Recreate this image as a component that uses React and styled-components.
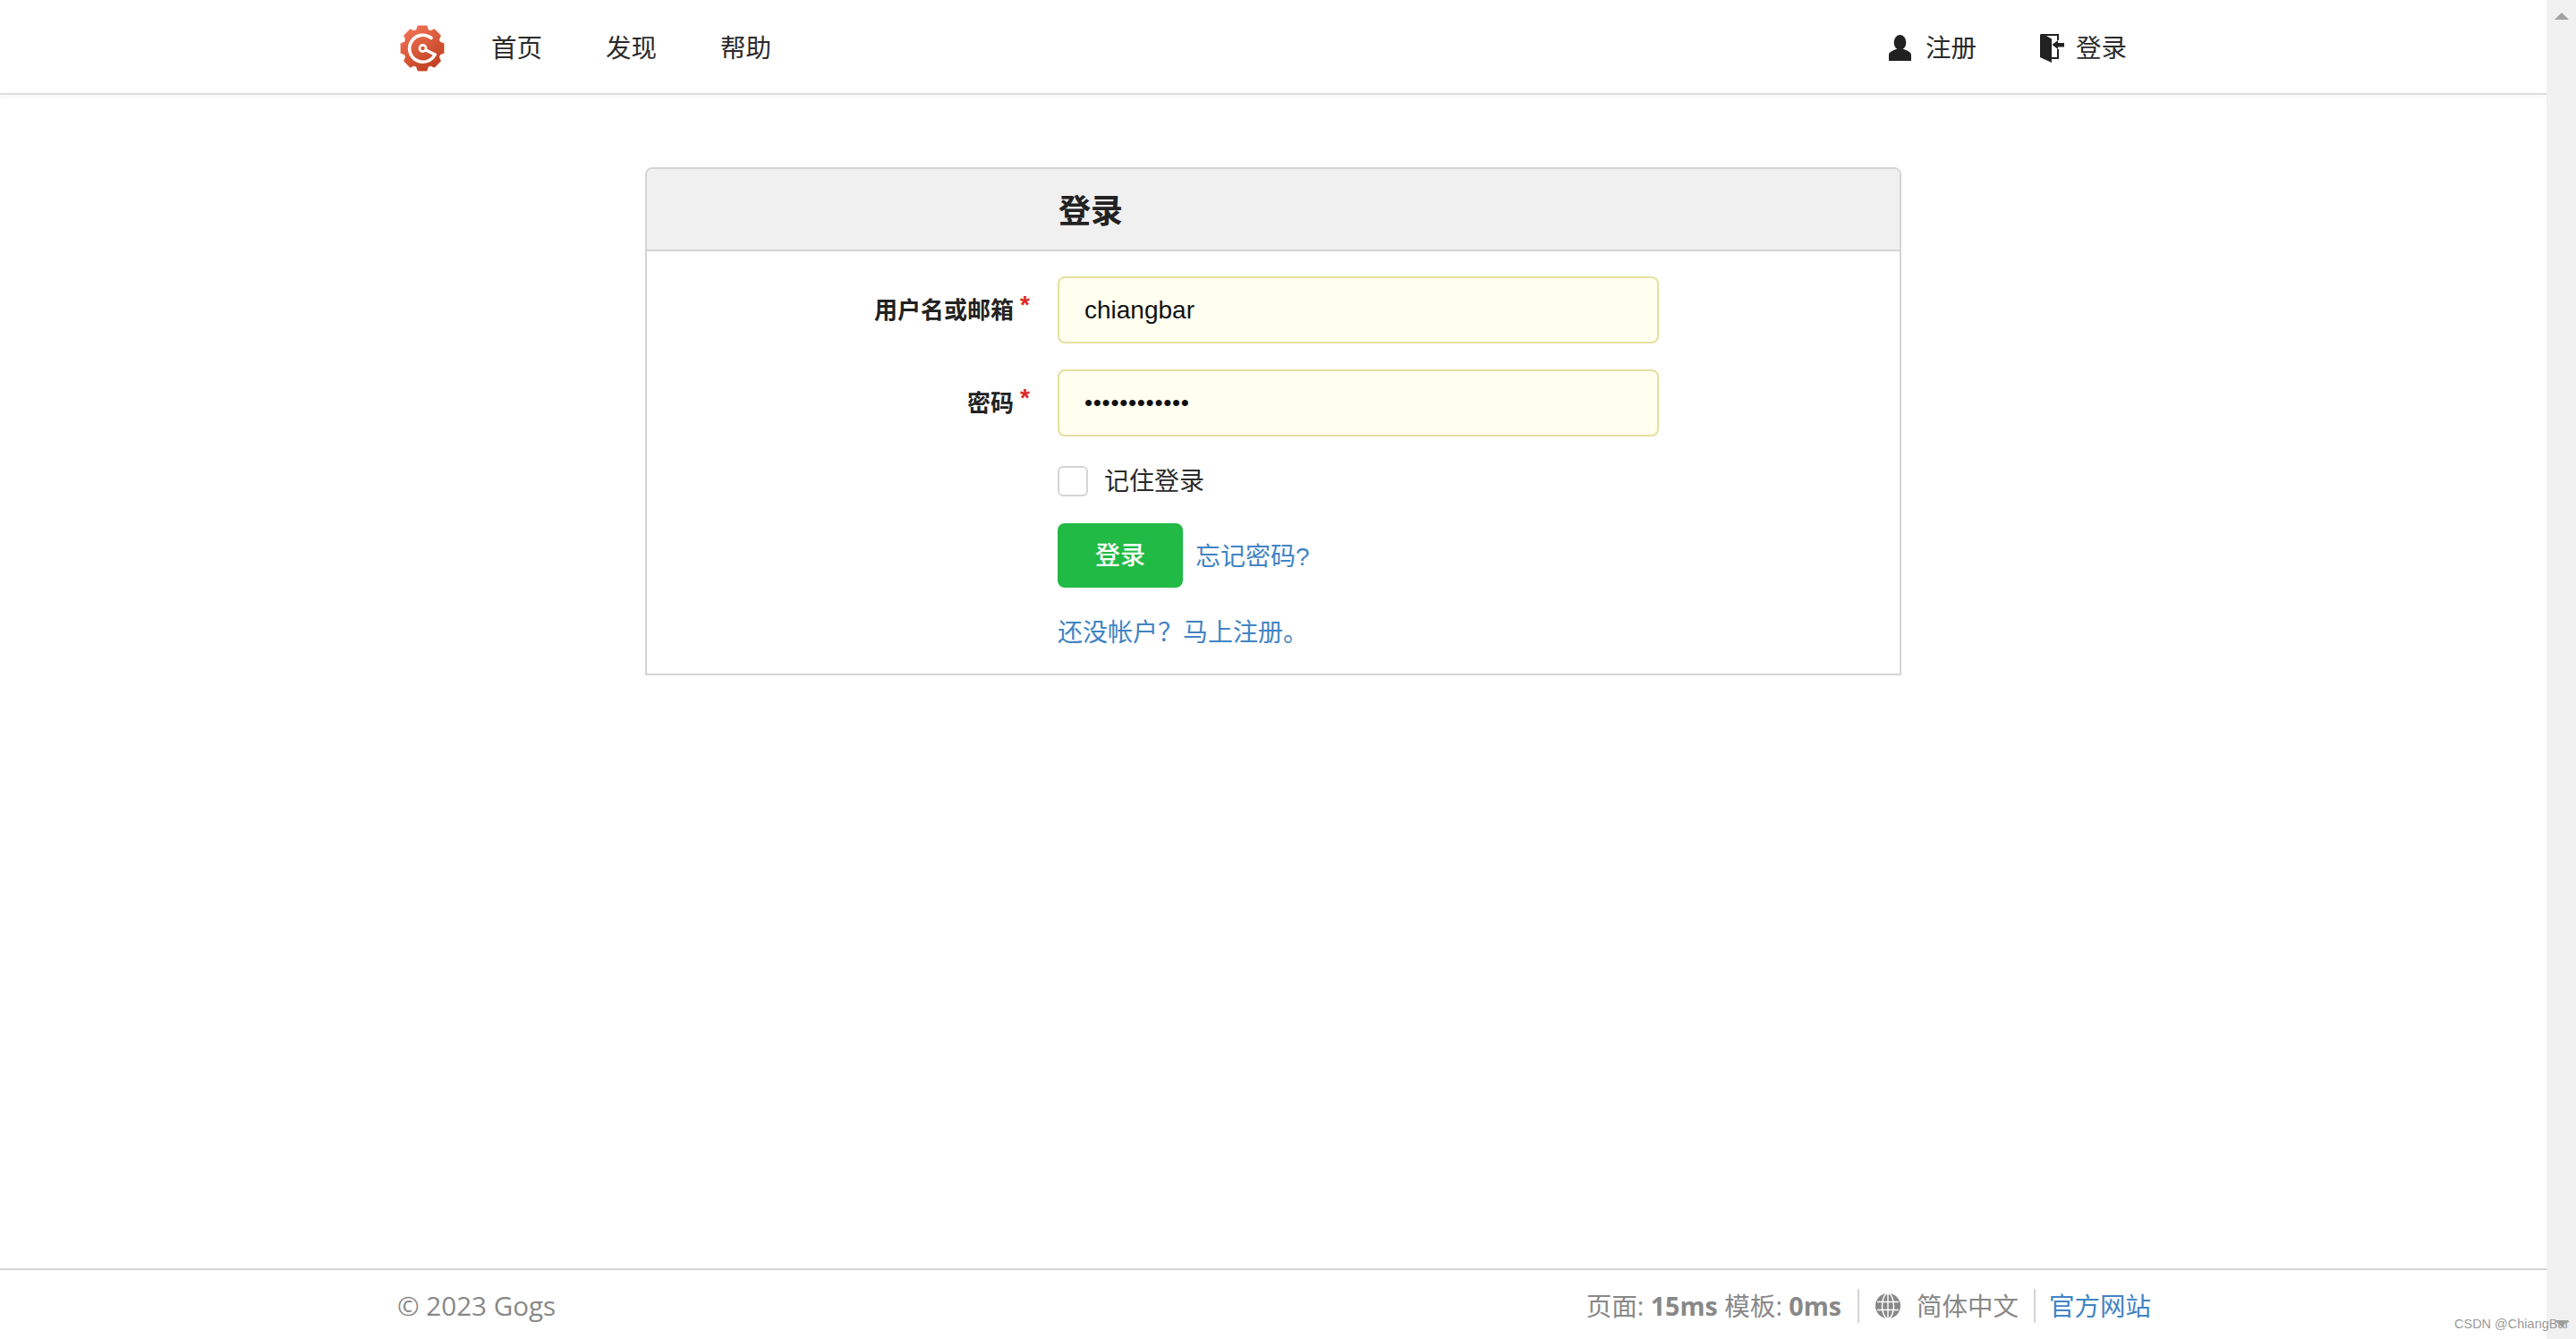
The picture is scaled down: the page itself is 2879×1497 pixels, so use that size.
import React from "react";
import styled, { createGlobalStyle } from "styled-components";

const Global = createGlobalStyle`
  *, *::before, *::after { box-sizing: border-box; }
  html, body { margin: 0; height: 100%; overflow: hidden; background: #fff; }
  body { font-family: "Liberation Sans", "Noto Sans CJK SC", sans-serif; color: #212121; }
  a { text-decoration: none; }
`;
const CJK = `"Liberation Sans", "Noto Sans CJK SC", sans-serif`;
const FOOT = `"Open Sans", "Noto Sans CJK SC", sans-serif`;

const Shell = styled.div`
  position: relative;
  display: flex;
  width: 100%;
  height: 100vh;
`;
const Page = styled.div`
  flex: 1;
  min-width: 0;
  display: flex;
  flex-direction: column;
`;
const Scrollbar = styled.aside`
  width: 33px;
  flex: none;
  background: #f1f1f1;
  display: flex;
  flex-direction: column;
  justify-content: space-between;
  align-items: center;
  padding: 14px 0 13px;
`;
const ArrowUp = styled.i`
  width: 0;
  height: 0;
  border-left: 8px solid transparent;
  border-right: 8px solid transparent;
  border-bottom: 8px solid #a3a3a3;
`;
const ArrowDown = styled.i`
  width: 0;
  height: 0;
  border-left: 8px solid transparent;
  border-right: 8px solid transparent;
  border-top: 8px solid #a3a3a3;
`;
const Watermark = styled.div`
  position: absolute;
  left: 2743px;
  top: 1472px;
  font: 14.5px/17px "Liberation Sans", sans-serif;
  color: #9a9a9a;
  white-space: nowrap;
`;

const Nav = styled.header`
  height: 106px;
  flex: none;
  border-bottom: 2px solid #dedede;
  box-shadow: 0 2px 8px rgba(34, 36, 38, 0.05);
`;
const NavInner = styled.div`
  width: 1958px;
  height: 100%;
  margin: 0 auto;
  display: flex;
  align-items: center;
  padding: 3px 24px 0 3px;
`;
const LogoLink = styled.a`
  display: flex;
  margin-right: 52px;
  filter: blur(0.5px);
`;
const NavLink = styled.a`
  font-size: 28.5px;
  line-height: 40px;
  color: #2b2b2b;
  font-family: ${CJK};
  margin-right: ${(p) => p.$gap || 71}px;
  display: flex;
  align-items: center;
  gap: ${(p) => p.$icon || 0}px;
`;
const Spacer = styled.div`
  flex: 1;
`;

const Main = styled.main`
  flex: 1;
  padding-top: 81px;
`;
const Panel = styled.section`
  width: 1404px;
  margin: 0 auto;
  border: 2px solid #d4d4d5;
  border-radius: 8px 8px 0 0;
`;
const PanelTitle = styled.h3`
  margin: 0;
  height: 92px;
  padding-left: 460px;
  background: #f0f0f0;
  border-bottom: 2px solid #d4d4d5;
  border-radius: 6px 6px 0 0;
  font: 700 36px/95px ${CJK};
  color: #222;
`;
const Form = styled.form`
  padding: 28px 0 25px;
  display: flex;
  flex-direction: column;
`;
const Row = styled.div`
  display: flex;
  align-items: center;
  margin-bottom: ${(p) => p.$mb ?? 29}px;
`;
const LabelCell = styled.label`
  width: 459px;
  flex: none;
  padding-right: 49px;
  text-align: right;
  font: 700 26px/34px ${CJK};
  color: #222;
  position: relative;
  &::after {
    content: "*";
    position: absolute;
    right: 31px;
    top: -3px;
    color: #db2828;
    font: 700 28px/28px "Liberation Sans", sans-serif;
  }
`;
const Offset = styled.div`
  width: 459px;
  flex: none;
`;
const TextInput = styled.input`
  width: 672px;
  height: 75px;
  padding: 0 28px;
  background: #fffff0;
  border: 2px solid #e5dfa0;
  border-radius: 8px;
  outline: none;
  color: #111;
  font: 28px "Liberation Sans", sans-serif;
  ${(p) => p.type === "password" && "letter-spacing: 0.7px; font-size: 26px;"}
`;
const Check = styled.input`
  appearance: none;
  width: 34px;
  height: 34px;
  margin: 0 18px 0 0;
  background: #fff;
  border: 2px solid #d4d4d5;
  border-radius: 6px;
`;
const CheckLabel = styled.label`
  font: 28px/40px ${CJK};
  color: #2b2b2b;
  padding-top: 2px;
`;
const Submit = styled.button`
  width: 140px;
  height: 72px;
  padding: 0;
  border: 0;
  border-radius: 8px;
  background: #21ba45;
  color: #fff;
  font: 500 28px/74px ${CJK};
  margin-right: 14px;
`;
const TextLink = styled.a`
  color: #4183c4;
  font: 28px/40px ${CJK};
  padding-top: ${(p) => p.$top || 0}px;
`;

const Footer = styled.footer`
  height: 79px;
  flex: none;
  border-top: 2px solid #d4d4d5;
`;
const FooterInner = styled.div`
  width: 1958px;
  height: 100%;
  margin: 0 auto;
  padding-top: 2px;
  display: flex;
  align-items: center;
  justify-content: space-between;
  color: #888;
  font: 29.6px/40px ${FOOT};
`;
const FooterRight = styled.div`
  display: flex;
  align-items: center;
  margin-right: -2px;
`;
const Stats = styled.span`
  font-size: 28.6px;
  white-space: nowrap;
  b { font-weight: 700; }
`;
const VLine = styled.i`
  width: 2px;
  height: 38px;
  background: #d4d4d5;
  margin: 0 ${(p) => p.$r}px 0 ${(p) => p.$l}px;
`;
const Lang = styled.span`
  display: flex;
  align-items: center;
  gap: 18px;
  font-size: 28.5px;
`;
const FootLink = styled.a`
  color: #4183c4;
  font-size: 28.5px;
`;

const gearPath = (() => {
  const pt = (r, deg) => {
    const a = (deg * Math.PI) / 180;
    return `${(25 + 0.96 * r * Math.cos(a)).toFixed(2)} ${(26 + r * Math.sin(a)).toFixed(2)}`;
  };
  const parts = [];
  for (let i = 0; i < 8; i++) {
    const c = -90 + i * 45;
    parts.push(pt(22, c - 19), pt(26, c - 12), pt(26, c + 12), pt(22, c + 19));
  }
  return `M${parts.join("L")}Z`;
})();

const Logo = () => (
  <svg width="50" height="52" viewBox="0 0 50 52" aria-label="Gogs">
    <defs>
      <linearGradient id="g" x1="0.2" y1="0" x2="0.8" y2="1">
        <stop offset="0" stopColor="#f27456" />
        <stop offset="1" stopColor="#bd3d1d" />
      </linearGradient>
    </defs>
    <path fill="url(#g)" d={gearPath} />
    <g fill="none" stroke="#fff" strokeWidth="3.6" strokeLinecap="round">
      <path d="M35 14.500A15 15 0 1 0 39 33" />
      <path d="M39 33L29 28" />
      <circle cx="25.500" cy="26" r="3.600" strokeWidth="2.600" />
    </g>
  </svg>
);
const Person = () => (
  <svg width="25" height="29" viewBox="0 0 25 29" fill="#212121">
    <ellipse cx="12.500" cy="8.500" rx="6.800" ry="8.500" />
    <path d="M0 29v-6.500c0-3.500 4-4.600 8-6.500h9c4 1.900 8 3 8 6.500V29z" />
  </svg>
);
const Door = () => (
  <svg width="27" height="32" viewBox="0 0 27 32" fill="#212121">
    <path d="M0 1.500C0 .7.700 0 1.500 0H21v7h-2V2H7l6 3.500V26h6v-9h2v11h-8v4L2 27 0 26z" />
    <path d="M13.500 12L20 7v3h7v4.500h-7V17z" />
  </svg>
);
const Globe = () => (
  <svg width="28" height="28" viewBox="0 0 28 28">
    <circle cx="14" cy="14" r="14" fill="#888" />
    <g fill="none" stroke="#fff" strokeWidth="1.400">
      <ellipse cx="14" cy="14" rx="6.500" ry="14" />
      <path d="M14 0v28M2 9.500h24M2 18.500h24" />
    </g>
  </svg>
);

export default function App() {
  return (
    <>
      <Global />
      <Shell>
        <Page>
          <Nav>
            <NavInner>
              <LogoLink href="#"><Logo /></LogoLink>
              <NavLink href="#">首页</NavLink>
              <NavLink href="#">发现</NavLink>
              <NavLink href="#" $gap={1}>帮助</NavLink>
              <Spacer />
              <NavLink href="#" $icon={16}><Person />注册</NavLink>
              <NavLink href="#" $icon={13} $gap={1}><Door />登录</NavLink>
            </NavInner>
          </Nav>
          <Main>
            <Panel>
              <PanelTitle>登录</PanelTitle>
              <Form>
                <Row>
                  <LabelCell>用户名或邮箱</LabelCell>
                  <TextInput type="text" readOnly value="chiangbar" />
                </Row>
                <Row>
                  <LabelCell>密码</LabelCell>
                  <TextInput type="password" readOnly value="chiangbar123" />
                </Row>
                <Row $mb={26}>
                  <Offset />
                  <Check type="checkbox" />
                  <CheckLabel>记住登录</CheckLabel>
                </Row>
                <Row $mb={31}>
                  <Offset />
                  <Submit type="button">登录</Submit>
                  <TextLink href="#" $top={3}>忘记密码?</TextLink>
                </Row>
                <Row $mb={0}>
                  <Offset />
                  <TextLink href="#">还没帐户？马上注册。</TextLink>
                </Row>
              </Form>
            </Panel>
          </Main>
          <Footer>
            <FooterInner>
              <span>© 2023 Gogs</span>
              <FooterRight>
                <Stats>页面: <b>15ms</b> 模板: <b>0ms</b></Stats>
                <VLine $l={18} $r={18} />
                <Lang><Globe />简体中文</Lang>
                <VLine $l={17} $r={15} />
                <FootLink href="#">官方网站</FootLink>
              </FooterRight>
            </FooterInner>
          </Footer>
        </Page>
        <Scrollbar>
          <ArrowUp />
          <ArrowDown />
        </Scrollbar>
        <Watermark>CSDN @ChiangBar</Watermark>
      </Shell>
    </>
  );
}
